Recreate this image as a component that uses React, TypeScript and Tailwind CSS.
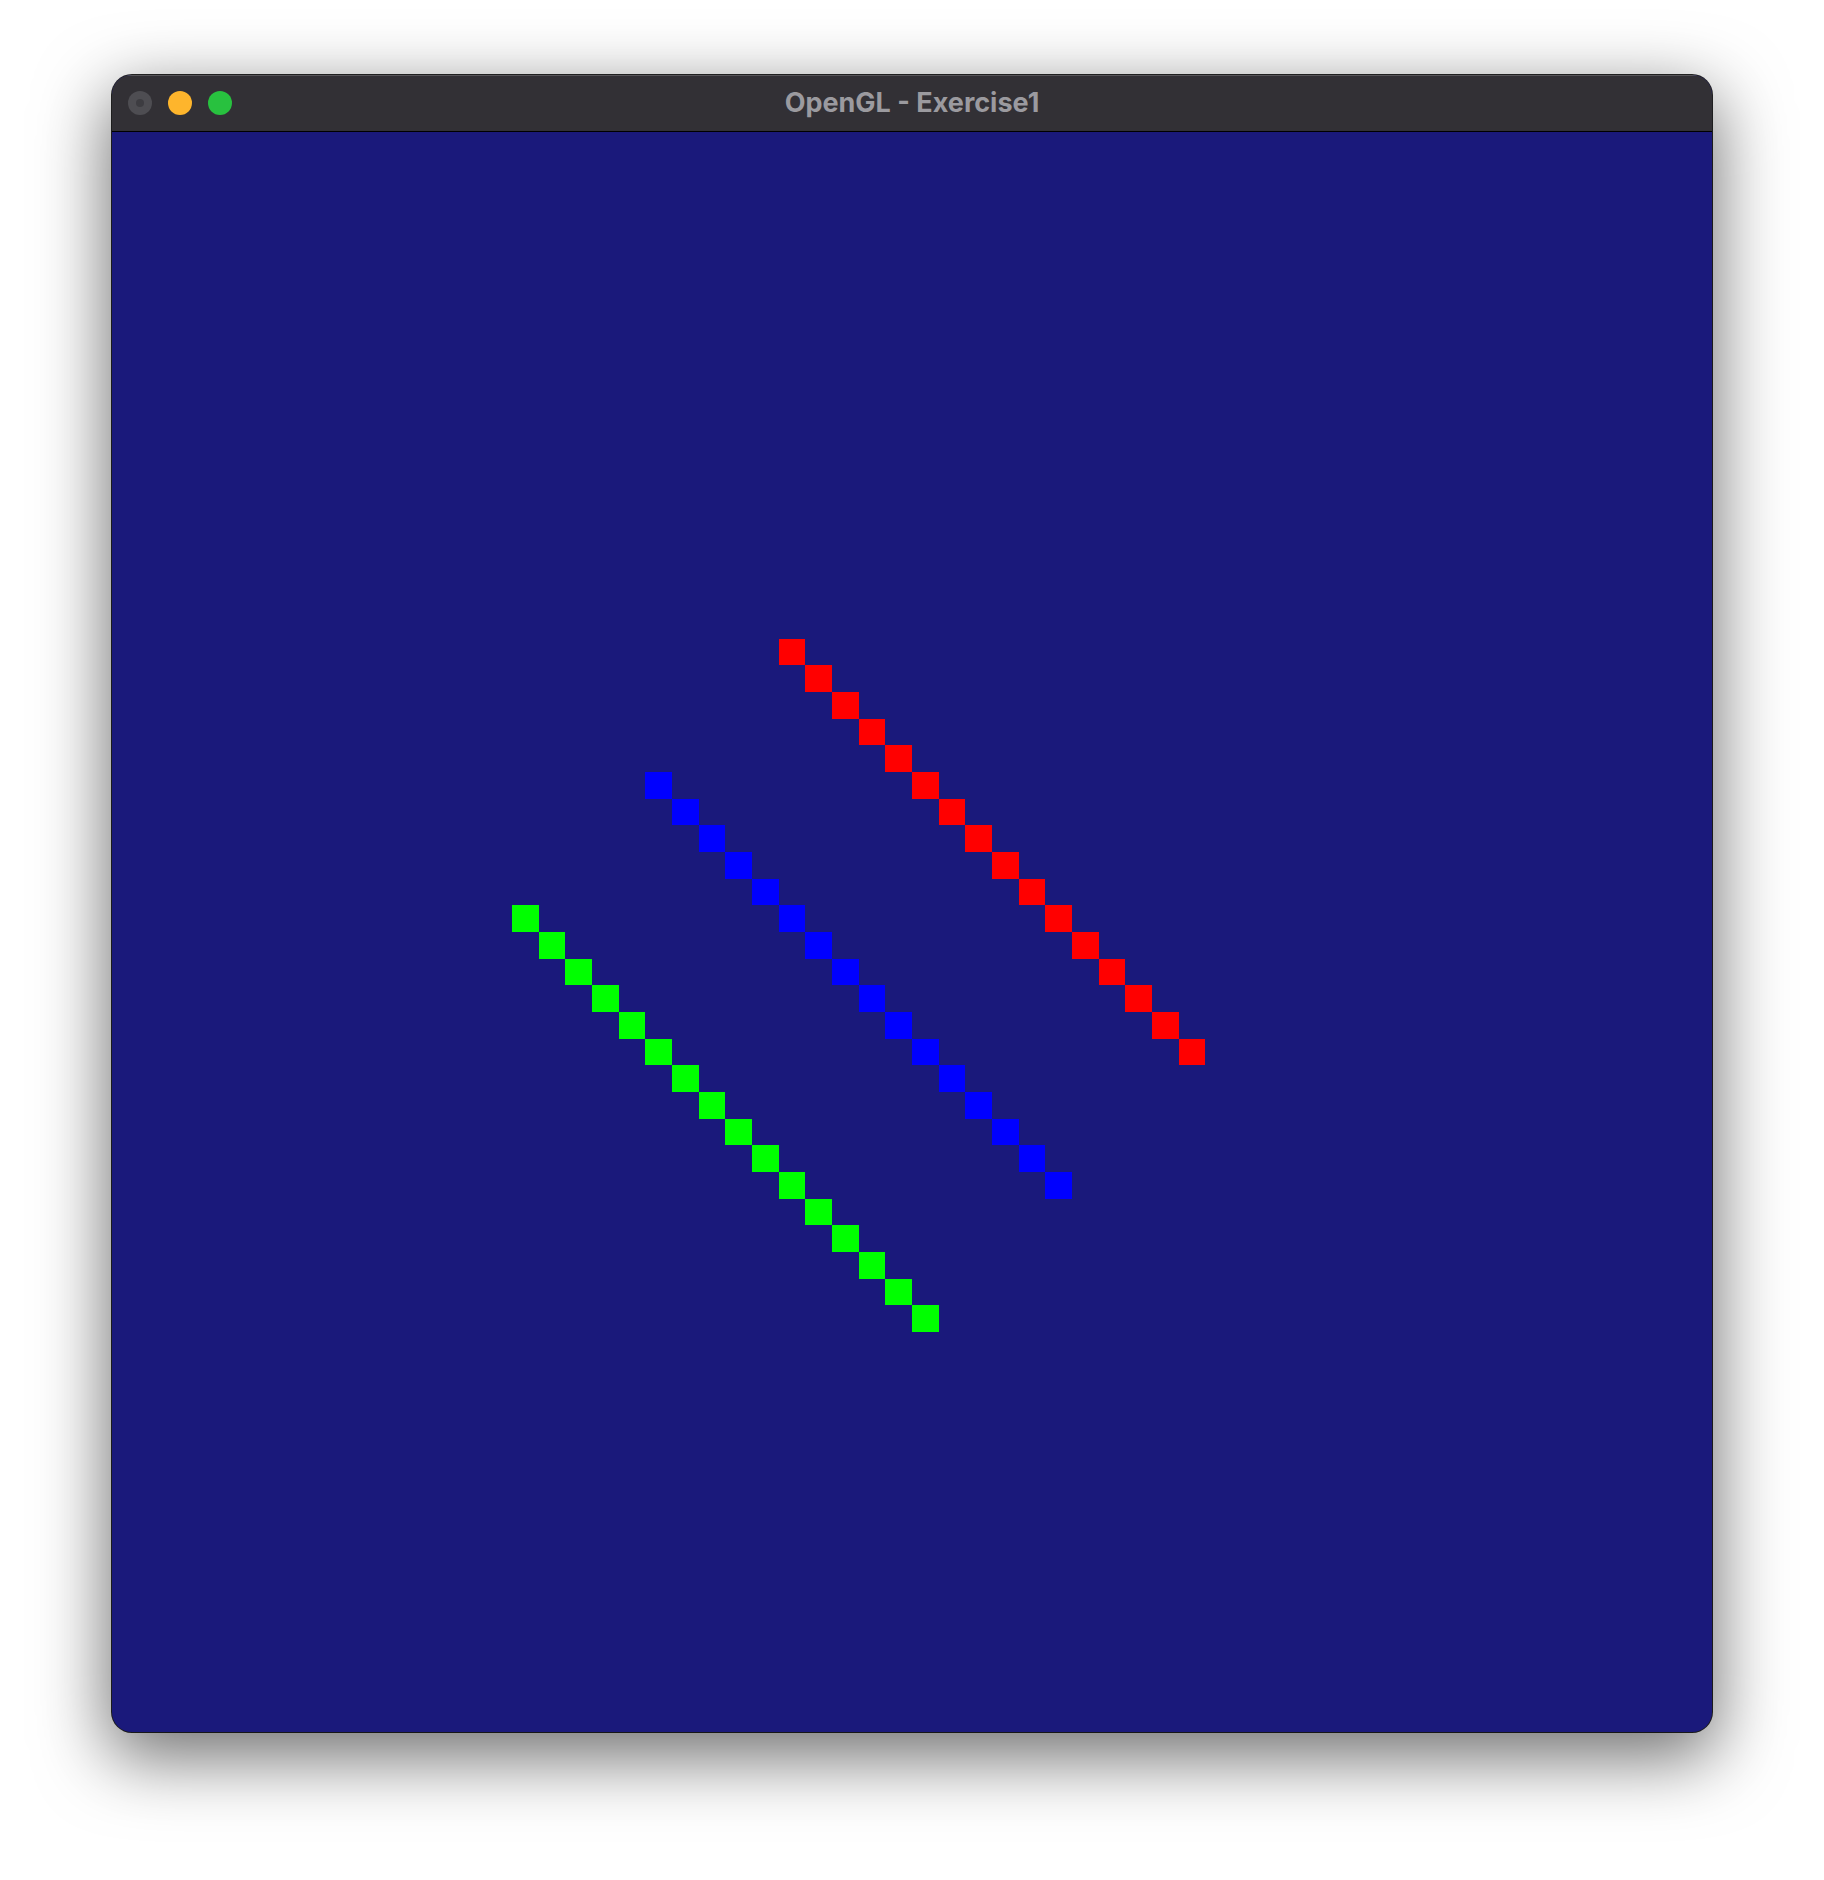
import React from "react";

// grid is 60x60 cells over the 1600px viewport
const lines = [
  { color: "#ff0000", col: 25, row: 19 },
  { color: "#0000ff", col: 20, row: 24 },
  { color: "#00ff00", col: 15, row: 29 },
];

const Canvas = () => (
  <svg
    viewBox="0 0 60 60"
    width={1600}
    height={1600}
    shapeRendering="crispEdges"
    className="block"
  >
    {lines.map((l) =>
      Array.from({ length: 16 }).map((_, i) => (
        <rect
          key={`${l.color}-${i}`}
          x={l.col + i}
          y={l.row + i}
          width={1}
          height={1}
          fill={l.color}
        />
      ))
    )}
  </svg>
);

const App = () => {
  return (
    <div className="w-[1824px] h-[1880px] bg-white flex justify-center pt-[75px] font-['Inter','Liberation_Sans',sans-serif]">
      <div className="w-[1600px] h-[1657px] rounded-[20px] overflow-hidden bg-[#1a197b] shadow-[0_0_0_1px_rgba(0,0,0,0.85),0_22px_70px_4px_rgba(0,0,0,0.56)]">
        {/* Title bar */}
        <div className="relative h-[57px] bg-[#323035] border-b border-black shadow-[inset_0_1px_0_rgba(255,255,255,0.18)] flex items-center">
          <div className="flex items-center gap-4 pl-4">
            <span className="w-6 h-6 rounded-full bg-[#4e4d52] flex items-center justify-center">
              <span className="w-2 h-2 rounded-full bg-[#3d3c41]" />
            </span>
            <span className="w-6 h-6 rounded-full bg-[#feb52c]" />
            <span className="w-6 h-6 rounded-full bg-[#28c13f]" />
          </div>
          <div className="absolute inset-0 flex items-center justify-center pointer-events-none">
            <span className="text-[27px] font-bold text-[#9b9a9f]">
              OpenGL - Exercise1
            </span>
          </div>
        </div>
        {/* GL viewport */}
        <div className="w-[1600px] h-[1600px]">
          <Canvas />
        </div>
      </div>
    </div>
  );
};

export default App;
